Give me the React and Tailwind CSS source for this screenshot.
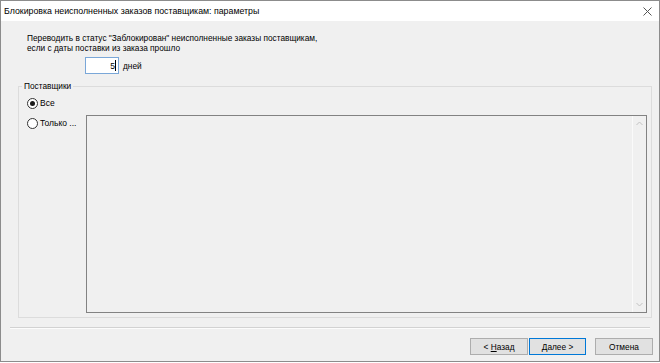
import React, { useState } from "react";

const font = { fontFamily: '"Liberation Sans", Arial, sans-serif' };

const Radio = ({ checked, label, onClick }) => (
  <div className="flex items-center h-[12px] cursor-default" onClick={onClick}>
    <span className="w-[11px] h-[11px] rounded-full border border-[#333] bg-white flex items-center justify-center">
      {checked && <span className="w-[5px] h-[5px] rounded-full bg-[#1a1a1a]" />}
    </span>
    <span className="ml-[2px] text-[8.5px] leading-[10px] text-black">{label}</span>
  </div>
);

const Chevron = ({ up }) => (
  <svg width="7" height="5" viewBox="0 0 7 5">
    <path
      d={up ? "M0.5 4 L3.5 1 L6.5 4" : "M0.5 1 L3.5 4 L6.5 1"}
      fill="none"
      stroke="#c2c2c2"
      strokeWidth="1"
    />
  </svg>
);

const App = () => {
  const [mode, setMode] = useState("all");

  return (
    <div className="w-[660px] h-[363px] bg-white" style={font}>
      <div className="h-[362px] border border-[#8c8c8c] flex flex-col">
        {/* Title bar */}
        <div className="h-[20px] bg-white flex items-center justify-between">
          <span className="pl-[3px] text-[8.8px] leading-[12px] text-black">
            Блокировка неисполненных заказов поставщикам: параметры
          </span>
          <svg width="9" height="9" viewBox="0 0 9 9" className="mr-[7px]">
            <path d="M0.5 0.5 L8.5 8.5 M8.5 0.5 L0.5 8.5" stroke="#555" strokeWidth="1" />
          </svg>
        </div>

        {/* Body */}
        <div className="flex-1 bg-[#f0f0f0] flex flex-col">
          <div className="pl-[26px] pt-[12px] text-[8.3px] leading-[10px] text-black">
            <div>Переводить в статус "Заблокирован" неисполненные заказы поставщикам,</div>
            <div>если с даты поставки из заказа прошло</div>
          </div>

          <div className="flex items-center pl-[84px] mt-[4px]">
            <div className="w-[34px] h-[17px] bg-white border border-[#7aa7d8] flex items-center justify-end pr-[2px]">
              <span className="text-[8.5px] leading-[10px] text-black">5</span>
              <span className="w-px h-[11px] bg-black" />
            </div>
            <span className="ml-[4px] text-[8.3px] leading-[10px] text-black">дней</span>
          </div>

          {/* Suppliers group */}
          <fieldset className="ml-[17px] w-[634px] h-[237px] mt-[7px] border border-[#dcdcdc] px-0 pb-[4px]">
            <legend className="ml-[3px] px-[2px] text-[8.3px] leading-[10px] text-black">
              Поставщики
            </legend>
            <div className="flex">
              <div className="w-[67px] pl-[8px] pt-[6px] flex flex-col gap-[8px]">
                <Radio checked={mode === "all"} label="Все" onClick={() => setMode("all")} />
                <Radio checked={mode === "some"} label="Только ..." onClick={() => setMode("some")} />
              </div>
              <div className="flex-1 pt-[24px] pr-[4px]">
                <div className="h-[198px] border border-[#828282] bg-[#f0f0f0] flex justify-end">
                  <div className="w-[14px] border-l border-[#fafafa] bg-[#f0f0f0] flex flex-col items-center justify-between py-[5px]">
                    <Chevron up />
                    <Chevron />
                  </div>
                </div>
              </div>
            </div>
          </fieldset>

          <div className="mx-[9px] mt-[9px] border-t border-[#d2d2d2] border-b border-b-[#fcfcfc]" />

          <div className="flex justify-end pr-[6px] mt-[9px]">
            <button className="w-[58px] h-[17px] bg-[#e1e1e1] border border-[#adadad] text-[8.3px] leading-[10px] text-black">
              &lt; <span className="underline">Н</span>азад
            </button>
            <button className="ml-[1px] w-[57px] h-[17px] bg-[#e1e1e1] border border-[#0078d7] text-[8.3px] leading-[10px] text-black">
              <span className="underline">Д</span>алее &gt;
            </button>
            <button className="ml-[9px] w-[58px] h-[17px] bg-[#e1e1e1] border border-[#adadad] text-[8.3px] leading-[10px] text-black">
              Отмена
            </button>
          </div>
        </div>
      </div>
    </div>
  );
};

export default App;
